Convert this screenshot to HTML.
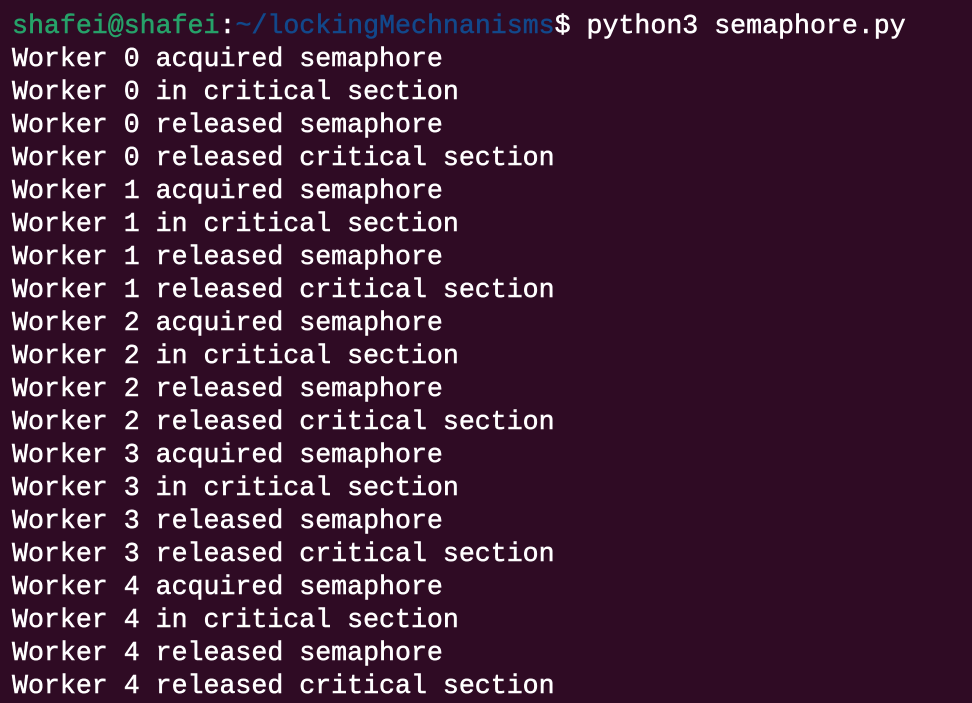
<!DOCTYPE html>
<html><head><style>
html,body{margin:0;padding:0;}
body{width:972px;height:701px;background:#2f0b24;overflow:hidden;}
pre{margin:0;padding:10px 0 0 12px;font-family:"Liberation Mono","DejaVu Sans Mono",monospace;font-size:26.6px;line-height:33px;color:#ffffff;font-weight:normal;-webkit-text-stroke:0.5px currentColor;}
.g{color:#26a269;}.b{color:#12488b;}
</style></head><body><pre><span class="g">shafei@shafei</span>:<span class="b">~/lockingMechnanisms</span>$ python3 semaphore.py
Worker 0 acquired semaphore
Worker 0 in critical section
Worker 0 released semaphore
Worker 0 released critical section
Worker 1 acquired semaphore
Worker 1 in critical section
Worker 1 released semaphore
Worker 1 released critical section
Worker 2 acquired semaphore
Worker 2 in critical section
Worker 2 released semaphore
Worker 2 released critical section
Worker 3 acquired semaphore
Worker 3 in critical section
Worker 3 released semaphore
Worker 3 released critical section
Worker 4 acquired semaphore
Worker 4 in critical section
Worker 4 released semaphore
Worker 4 released critical section</pre></body></html>
